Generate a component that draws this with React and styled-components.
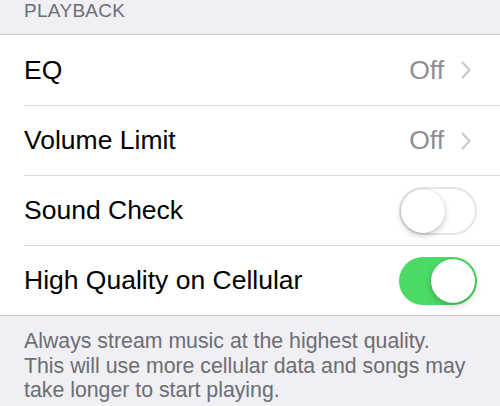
import React, { useState } from "react";
import styled, { createGlobalStyle } from "styled-components";

const Global = createGlobalStyle`
  html, body { margin: 0; padding: 0; background: #efeff4; }
  body { font-family: "Liberation Sans", Arial, sans-serif; -webkit-font-smoothing: antialiased; }
`;

const Page = styled.div`
  width: 500px;
  height: 406px;
  background: #efeff4;
  overflow: hidden;
`;

const Header = styled.div`
  height: 34px;
  padding: 0 24px;
  box-sizing: border-box;
  display: flex;
  align-items: flex-start;
  font-size: 19px;
  color: #6d6d72;
  letter-spacing: 0.3px;
  line-height: 26px;
  margin-top: -2px;
`;

const Group = styled.div`
  background: #fff;
  border-top: 1px solid #c8c7cc;
  border-bottom: 1px solid #c8c7cc;
  margin-top: 2px;
`;

const Row = styled.div`
  height: 70px;
  margin-left: 24px;
  padding-right: 24px;
  box-sizing: border-box;
  display: flex;
  align-items: center;
  justify-content: space-between;
  border-top: ${(p) => (p.$first ? "none" : "1px solid #d9d8dc")};
`;

const Label = styled.span`
  font-size: 26.5px;
  color: #000;
`;

const Detail = styled.span`
  display: flex;
  align-items: center;
  gap: 17px;
  font-size: 26.5px;
  color: #8e8e93;
  margin-right: 5px;
`;

const Toggle = styled.div`
  width: 78px;
  height: 48px;
  border-radius: 24px;
  box-sizing: border-box;
  position: relative;
  margin-right: -1px;
  background: ${(p) => (p.$on ? "#4cd964" : "#fff")};
  border: ${(p) => (p.$on ? "none" : "2px solid #e5e5ea")};
  cursor: pointer;
`;

const Knob = styled.div`
  position: absolute;
  top: ${(p) => (p.$on ? "2px" : "0px")};
  left: ${(p) => (p.$on ? "32px" : "0px")};
  width: 44px;
  height: 44px;
  border-radius: 50%;
  background: #fff;
  box-shadow: 0 3px 6px rgba(0, 0, 0, 0.2), 0 0 0 0.5px rgba(0, 0, 0, 0.12);
`;

const Footer = styled.div`
  padding: 13px 24px 0;
  font-size: 21.3px;
  line-height: 24.5px;
  color: #6d6d72;
`;

const Chevron = () => (
  <svg width="10" height="18" viewBox="0 0 10 18">
    <path d="M1.5 1.5 L8.5 9 L1.5 16.5" fill="none" stroke="#c7c7cc" strokeWidth="2" strokeLinecap="round" strokeLinejoin="round" />
  </svg>
);

export default function App() {
  const [sound, setSound] = useState(false);
  const [hq, setHq] = useState(true);
  return (
    <Page>
      <Global />
      <Header>PLAYBACK</Header>
      <Group>
        <Row $first>
          <Label>EQ</Label>
          <Detail>Off<Chevron /></Detail>
        </Row>
        <Row>
          <Label>Volume Limit</Label>
          <Detail>Off<Chevron /></Detail>
        </Row>
        <Row>
          <Label>Sound Check</Label>
          <Toggle $on={sound} onClick={() => setSound(!sound)}><Knob $on={sound} /></Toggle>
        </Row>
        <Row>
          <Label>High Quality on Cellular</Label>
          <Toggle $on={hq} onClick={() => setHq(!hq)}><Knob $on={hq} /></Toggle>
        </Row>
      </Group>
      <Footer>
        Always stream music at the highest quality.<br />
        This will use more cellular data and songs may<br />
        take longer to start playing.
      </Footer>
    </Page>
  );
}
